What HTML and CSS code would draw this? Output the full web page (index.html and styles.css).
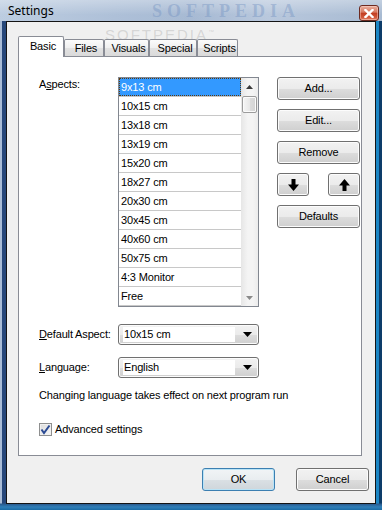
FILE: index.html
```html
<!DOCTYPE html>
<html>
<head>
<meta charset="utf-8">
<title>Settings</title>
<link rel="stylesheet" href="styles.css">
</head>
<body>
<div class="window">
  <div class="titlebar">
    <span class="title">Settings</span>
    <span class="wm-title">SOFTPEDIA</span>
    <div class="close">
      <svg width="10" height="9" viewBox="0 0 10 9"><path d="M1.5 1 L8.5 8 M8.5 1 L1.5 8" stroke="#fff" stroke-width="2.4" stroke-linecap="square"/></svg>
    </div>
  </div>
  <div class="client">
    <span class="wm-tabs">SOFTPEDIA<sup>™</sup></span>
    <div class="tabs">
      <div class="tab active t-basic">Basic</div>
      <div class="tab t-files">Files</div>
      <div class="tab t-visuals">Visuals</div>
      <div class="tab t-special">Special</div>
      <div class="tab t-scripts">Scripts</div>
    </div>
    <div class="pane">
      <div class="aspects">
        <span class="lbl lbl-top">A<u>s</u>pects:</span>
        <div class="listbox">
          <ul class="items">
            <li class="sel"><span>9x13 cm</span></li>
            <li>10x15 cm</li>
            <li>13x18 cm</li>
            <li>13x19 cm</li>
            <li>15x20 cm</li>
            <li>18x27 cm</li>
            <li>20x30 cm</li>
            <li>30x45 cm</li>
            <li>40x60 cm</li>
            <li>50x75 cm</li>
            <li>4:3 Monitor</li>
            <li>Free</li>
          </ul>
          <div class="vscroll">
            <div class="sarrow"><svg width="7" height="4" viewBox="0 0 7 4"><path d="M0 4 L3.5 0 L7 4 Z" fill="#3a3a3a"/></svg></div>
            <div class="thumb"></div>
            <div class="track"></div>
            <div class="sarrow"><svg width="7" height="4" viewBox="0 0 7 4"><path d="M0 0 L3.5 4 L7 0 Z" fill="#8a8a8a"/></svg></div>
          </div>
        </div>
        <div class="btncol">
          <div class="btn">Add...</div>
          <div class="btn">Edit...</div>
          <div class="btn">Remove</div>
          <div class="arrows">
            <div class="btn sm"><svg width="11" height="12" viewBox="0 0 11 12"><path d="M3.5 0 H7.5 V5.5 H11 L5.5 12 L0 5.5 H3.5 Z" fill="#000"/></svg></div>
            <div class="btn sm"><svg width="11" height="12" viewBox="0 0 11 12"><path d="M3.5 12 H7.5 V6.5 H11 L5.5 0 L0 6.5 H3.5 Z" fill="#000"/></svg></div>
          </div>
          <div class="btn">Defaults</div>
        </div>
      </div>
      <div class="field first">
        <span class="lbl"><u>D</u>efault Aspect:</span>
        <div class="combo"><span>10x15 cm</span><svg width="9" height="5" viewBox="0 0 9 5"><path d="M0 0 H9 L4.5 5 Z" fill="#000"/></svg></div>
      </div>
      <div class="field">
        <span class="lbl"><u>L</u>anguage:</span>
        <div class="combo"><span>English</span><svg width="9" height="5" viewBox="0 0 9 5"><path d="M0 0 H9 L4.5 5 Z" fill="#000"/></svg></div>
      </div>
      <p class="note">Changing language takes effect on next program run</p>
      <div class="check">
        <span class="box"><svg width="11" height="11" viewBox="0 0 11 11"><path d="M1.5 5.5 L4 9 L9.5 1.5" fill="none" stroke="#2b4a93" stroke-width="2"/></svg></span>
        <span>Advanced settings</span>
      </div>
    </div>
    <div class="footer">
      <div class="btn dlg default">OK</div>
      <div class="btn dlg">Cancel</div>
    </div>
  </div>
</div>
</body>
</html>
```

FILE: styles.css
```css
* { box-sizing: border-box; }
html, body { margin: 0; padding: 0; }
body {
  width: 382px;
  height: 510px;
  overflow: hidden;
  font-family: "Liberation Sans", Arial, sans-serif;
  font-size: 11px;
  letter-spacing: -0.15px;
  color: #000;
}
.window {
  width: 382px;
  height: 510px;
  display: flex;
  flex-direction: column;
  padding: 0 6px 6px 6px;
  background:
    linear-gradient(to bottom, rgba(0,0,0,0) 0, rgba(0,0,0,0) 503px, #2a5a8e 504px, #2f7fb8 507px, #1b6aa4 510px),
    linear-gradient(to right, #a9bcd6 0, #a9bcd6 2px, #26477a 2px, #26477a 6px, #4a78ae 50%, #1c86c4 376px, #1c86c4 379px, #0d3c69 379px);
}
.titlebar {
  position: relative;
  height: 21px;
  margin: 0 -6px;
  display: flex;
  align-items: flex-start;
  background:
    linear-gradient(to bottom, rgba(255,255,255,0.35), rgba(255,255,255,0.05) 70%),
    linear-gradient(to right, #b9cadf 0, #aabdd6 30%, #a2b6d1 50%, #b5c5db 70%, #a3b7d0 100%);
}
.title {
  padding: 4px 0 0 8px;
  font-family: "Noto Sans", "Open Sans", sans-serif;
  font-size: 12px;
  line-height: 14px;
  letter-spacing: 0;
}
.wm-title {
  position: absolute;
  left: 152px;
  top: 1px;
  font-family: "Liberation Serif", serif;
  font-weight: bold;
  font-size: 18px;
  line-height: 20px;
  letter-spacing: 5px;
  color: rgba(120, 150, 195, 0.45);
}
.close {
  margin-left: auto;
  margin-right: 3px;
  margin-top: 5px;
  width: 20px;
  height: 16px;
  border: 1px solid #6d2a20;
  border-radius: 3px;
  background: linear-gradient(to bottom, #eab0a0 0, #d6775f 45%, #c13c20 50%, #d0573a 80%, #e2846a 100%);
  box-shadow: inset 0 0 0 1px rgba(255,220,210,0.45);
  display: flex;
  align-items: center;
  justify-content: center;
}
.client {
  position: relative;
  flex: 1;
  border: 1px solid #141414;
  background: #f0f0f0;
  display: flex;
  flex-direction: column;
  padding: 14px 13px 0 11px;
}
.wm-tabs {
  position: absolute;
  left: 98px;
  top: 4px;
  font-size: 15px;
  letter-spacing: 2px;
  color: rgba(150, 150, 150, 0.3);
}
.wm-tabs sup { font-size: 6px; }
.tabs {
  display: flex;
  align-items: flex-end;
  height: 20px;
}
.tab {
  position: relative;
  height: 17px;
  border: 1px solid #898c95;
  border-bottom: none;
  border-radius: 2px 2px 0 0;
  background: linear-gradient(to bottom, #fbfbfb 0, #efefef 50%, #e2e2e2 51%, #dadada 100%);
  display: flex;
  align-items: center;
  justify-content: center;
  padding: 1px 0 0 4px;
  line-height: 13px;
}
.tab.active {
  z-index: 2;
  height: 21px;
  margin-bottom: -1px;
  background: #fff;
  padding: 0 0 2px 4px;
}
.t-basic { width: 46px; }
.t-files { width: 40px; }
.t-visuals { width: 45px; }
.t-special { width: 48px; }
.t-scripts { width: 41px; }
.pane {
  position: relative;
  z-index: 1;
  height: 400px;
  border: 1px solid #898c95;
  background: #fff;
  padding: 20px 0 0 20px;
  display: flex;
  flex-direction: column;
}
.lbl { width: 79px; line-height: 13px; }
.lbl-top { padding-top: 1px; }
u { text-decoration-thickness: 1px; text-underline-offset: 1px; }
.aspects {
  display: flex;
  align-items: flex-start;
}
.listbox {
  width: 141px;
  height: 230px;
  border: 1px solid #828790;
  display: flex;
  background: #fff;
}
.items {
  list-style: none;
  margin: 0;
  padding: 0;
  width: 122px;
}
.items li {
  height: 19px;
  line-height: 18px;
  padding-left: 2px;
  border-bottom: 1px solid #c8c8c8;
  white-space: nowrap;
}
.items li.sel {
  padding: 0;
}
.items li.sel span {
  display: block;
  height: 18px;
  background: #3399ff;
  color: #fff;
  border: 1px dotted #5a3a10;
  padding-left: 1px;
  line-height: 16px;
}
.vscroll {
  width: 17px;
  display: flex;
  flex-direction: column;
  background: linear-gradient(to right, #e6e6e6, #f4f4f4 40%, #f4f4f4 70%, #ececec);
}
.sarrow {
  height: 17px;
  display: flex;
  align-items: center;
  justify-content: center;
}
.thumb {
  height: 17px;
  margin: 1px 1px 0 1px;
  border: 1px solid #9c9c9c;
  border-radius: 2px;
  background: linear-gradient(to right, #f6f6f6, #e8e8e8 50%, #dcdcdc 51%, #d4d4d4);
  box-shadow: inset 0 0 0 1px #fbfbfb;
}
.track { flex: 1; }
.btncol {
  margin-left: 18px;
  width: 83px;
  display: flex;
  flex-direction: column;
  gap: 9px;
}
.btn {
  height: 23px;
  border: 1px solid #707070;
  border-radius: 3px;
  background: linear-gradient(to bottom, #f2f2f2 0, #ebebeb 50%, #dddddd 51%, #cfcfcf 100%);
  box-shadow: inset 0 0 0 1px #fcfcfc;
  display: flex;
  align-items: center;
  justify-content: center;
  line-height: 13px;
}
.arrows {
  display: flex;
  justify-content: space-between;
}
.btn.sm { width: 32px; }
.field {
  display: flex;
  align-items: center;
  margin-top: 12px;
}
.field.first { margin-top: 17px; }
.combo {
  width: 141px;
  height: 21px;
  border: 1px solid #707070;
  border-radius: 3px;
  background: linear-gradient(to bottom, #f2f2f2 0, #ebebeb 50%, #dddddd 51%, #cfcfcf 100%);
  box-shadow: inset 0 0 0 1px #fcfcfc;
  display: flex;
  align-items: center;
  justify-content: space-between;
  padding: 0 6px 0 4px;
  line-height: 13px;
}
.combo span {
  flex: 1;
  background: #fff;
  height: 15px;
  line-height: 15px;
  padding-left: 1px;
  margin-right: 8px;
}
.note {
  margin: 11px 0 0 0;
  line-height: 13px;
}
.check {
  display: flex;
  align-items: center;
  margin-top: 21px;
  line-height: 13px;
}
.box {
  width: 13px;
  height: 13px;
  border: 1px solid #8e8f8f;
  background: linear-gradient(135deg, #dcdcdc, #f6f6f6);
  box-shadow: inset 0 0 0 1px #f0f0f0;
  display: flex;
  align-items: center;
  justify-content: center;
  margin-right: 3px;
}
.footer {
  display: flex;
  justify-content: flex-end;
  margin: 12px -7px 0 0;
  gap: 21px;
}
.btn.dlg { width: 73px; }
.btn.default {
  border-color: #3c7fb1;
  box-shadow: inset 0 0 0 1px #b9e3f6;
  background: linear-gradient(to bottom, #f1f4f6 0, #e9edf0 50%, #dae0e4 51%, #cfd6db 100%);
}
```
